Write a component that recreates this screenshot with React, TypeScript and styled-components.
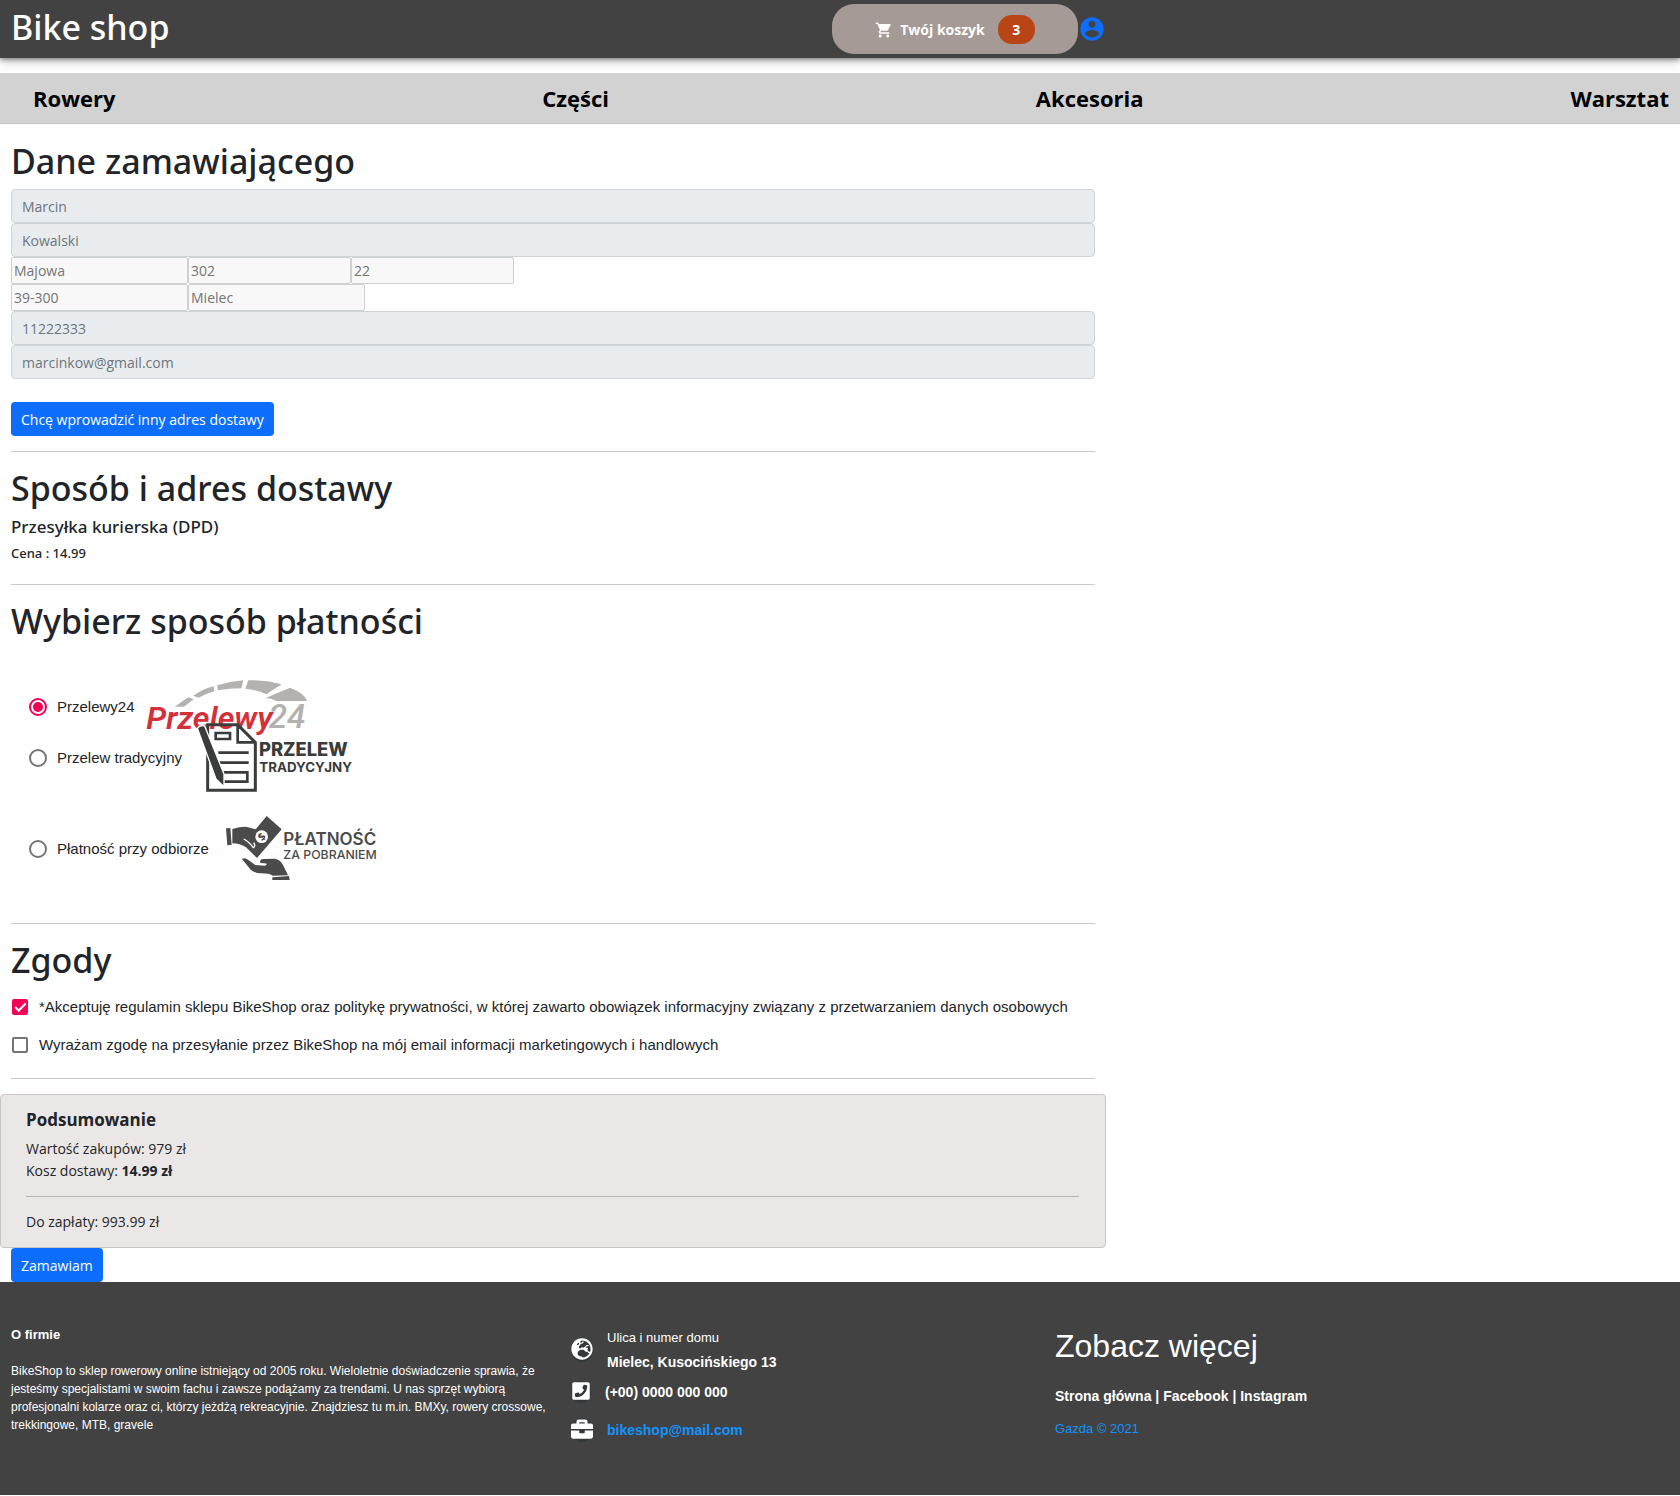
import React from "react";
import styled, { createGlobalStyle } from "styled-components";
import { FaPhoneSquare, FaBriefcase, FaGlobeEurope } from "react-icons/fa";

const sans = `"Open Sans", "Noto Sans", sans-serif`;
const display = `"Noto Sans", "Open Sans", sans-serif`;
const arial = `"Liberation Sans", Arial, sans-serif`;

const GlobalStyle = createGlobalStyle`
  *, *::before, *::after { box-sizing: border-box; }
  body {
    margin: 0;
    background: #fff;
    color: #212529;
    font-family: ${sans};
    font-size: 14px;
    line-height: 21px;
  }
  h1, h2, h3, p, ul { margin: 0; padding: 0; }
`;

const TopBar = styled.header`
  display: grid;
  grid-template-columns: 2fr 1fr;
  height: 58px;
  padding-right: 21px;
  background: #424242;
  box-shadow: 0 2px 4px rgba(0, 0, 0, 0.35), 0 4px 10px rgba(0, 0, 0, 0.2);
`;

const TopBarInner = styled.div`
  display: flex;
  align-items: center;
  justify-content: space-between;
  padding-left: 11px;
`;

const Brand = styled.h1`
  padding-bottom: 4px;
  color: #fff;
  font-family: ${display};
  font-size: 34px;
  font-weight: 500;
  line-height: 42px;
`;

const TopActions = styled.div`
  display: flex;
  align-items: center;
`;

const CartButton = styled.button`
  display: flex;
  align-items: center;
  justify-content: center;
  width: 246px;
  height: 50px;
  border: 0;
  border-radius: 22px;
  background: #a59a95;
  color: #fff;
  font: 700 14px/21px ${sans};
`;

const CartIcon = styled.svg`
  margin-top: 2px;
`;

const CartLabel = styled.span`
  padding: 0 13px 0 7px;
`;

const CartCount = styled.span`
  width: 37px;
  border-radius: 14px;
  background: #b94517;
  line-height: 29px;
  text-align: center;
`;

const AccountLink = styled.a`
  display: flex;
  color: #0d6efd;
`;

const Nav = styled.nav`
  margin-top: 15px;
  padding: 1px 11px 0 33px;
  border-bottom: 1px solid #c6c6c6;
  background: #d2d2d2;
`;

const NavList = styled.ul`
  display: flex;
  justify-content: space-between;
  list-style: none;
`;

const NavLink = styled.a`
  display: block;
  color: #000;
  font-size: 22px;
  font-weight: 700;
  line-height: 49px;
  text-decoration: none;
`;

const Layout = styled.div`
  display: grid;
  grid-template-columns: 2fr 1fr;
  padding: 16px 21px 0 0;
`;

const Section = styled.section<{ $bottom?: number }>`
  margin: 0 11px;
  padding-bottom: ${(p) => p.$bottom ?? 14}px;
  & + & {
    padding-top: 15px;
    border-top: 1px solid #c8c9ca;
  }
`;

const Heading = styled.h2`
  margin-bottom: 7px;
  font-family: ${display};
  font-size: 34px;
  font-weight: 500;
  line-height: 42px;
`;

const Field = styled.input`
  display: block;
  width: 100%;
  height: 34px;
  padding: 0 10px;
  border: 1px solid #ced4da;
  border-radius: 4px;
  background: #e9ecef;
  color: #6c757d;
  font: 14px ${sans};
  &::placeholder { color: #6c757d; opacity: 1; }
`;

const FieldRow = styled.div`
  display: flex;
`;

const SmallField = styled.input<{ $width: number }>`
  width: ${(p) => p.$width}px;
  height: 27px;
  padding: 0 2px;
  border: 1px solid #d0d0d0;
  border-radius: 2px;
  background: #f8f8f8;
  color: #757575;
  font: 14px ${sans};
  &::placeholder { color: #757575; opacity: 1; }
`;

const PrimaryButton = styled.button`
  height: 34px;
  padding: 0 10px;
  border: 0;
  border-radius: 4px;
  background: #0d6efd;
  color: #fff;
  font: 14px/21px ${sans};
`;

const AddressAction = styled.div`
  display: flex;
  padding-top: 23px;
`;

const SubmitRow = styled.div`
  display: flex;
  padding: 0 11px;
`;

const Method = styled.h3`
  margin-bottom: 8px;
  font-family: ${display};
  font-size: 17px;
  font-weight: 500;
  line-height: 21px;
`;

const Price = styled.p`
  font-family: ${display};
  font-size: 13px;
  font-weight: 500;
  line-height: 17px;
`;

const Payments = styled.div`
  padding: 31px 0 27px 18px;
`;

const PaymentRow = styled.div<{ $height: number; $shift?: number }>`
  display: flex;
  align-items: center;
  height: ${(p) => p.$height}px;
  margin-top: ${(p) => p.$shift ?? 0}px;
`;

const OptionLabel = styled.label`
  padding-bottom: 2px;
  font: 15px/21px ${arial};
`;

const Radio = styled.input`
  appearance: none;
  display: grid;
  place-content: center;
  width: 18px;
  height: 18px;
  margin: 0 10px 0 0;
  border: 2px solid #757575;
  border-radius: 50%;
  &:checked { border-color: #f50057; }
  &:checked::before {
    content: "";
    width: 10px;
    height: 10px;
    border-radius: 50%;
    background: #f50057;
  }
`;

const Logo = styled.svg`
  margin-left: 12px;
  overflow: visible;
`;

const ConsentRow = styled.div`
  display: flex;
  align-items: center;
  height: 38px;
`;

const Checkbox = styled.input`
  appearance: none;
  display: grid;
  place-content: center;
  width: 16px;
  height: 16px;
  margin: 0 11px 0 1px;
  border: 2px solid #757575;
  border-radius: 2px;
  &:checked { border-color: #f50057; background: #f50057; }
  &:checked::before {
    content: "";
    width: 11px;
    height: 6px;
    margin-bottom: 3px;
    border: solid #fff;
    border-width: 0 0 2px 2px;
    rotate: -45deg;
  }
`;

const Summary = styled.section`
  padding: 14px 26px 14px 25px;
  border: 1px solid #c8c5c4;
  border-radius: 4px;
  background: #ebe7e6;
`;

const SummaryTitle = styled.h3`
  margin-bottom: 8px;
  font-size: 17px;
  font-weight: 700;
  line-height: 21px;
`;

const SummaryLine = styled.p`
  font-size: 14px;
  line-height: 22px;
`;

const SummaryTotal = styled.div`
  margin-top: 14px;
  padding-top: 14px;
  border-top: 1px solid #b8b4b4;
`;

const Footer = styled.footer`
  display: grid;
  grid-template-columns: 560fr 484fr 614fr;
  min-height: 213px;
  padding: 0 11px;
  background: #424242;
  color: #fff;
  font-family: ${arial};
  font-size: 13px;
  line-height: 18px;
`;

const About = styled.div`
  padding: 44px 22px 0 0;
  font-size: 12px;
`;

const AboutTitle = styled.h3`
  margin-bottom: 18px;
  font-size: 13px;
  font-weight: 700;
  line-height: 18px;
`;

const Contact = styled.div`
  display: flex;
  flex-direction: column;
  padding-top: 44px;
`;

const ContactRow = styled.div<{ $height: number }>`
  display: flex;
  align-items: center;
  gap: 14px;
  height: ${(p) => p.$height}px;
`;

const IconBadge = styled.span`
  display: flex;
  padding-bottom: 2px;
  border-radius: 50%;
  background: #33383b;
`;

const Street = styled.p`
  line-height: 24px;
  strong { font-size: 14px; }
`;

const Phone = styled.p`
  font-size: 14px;
  font-weight: 700;
`;

const MailLink = styled.a`
  color: #1194ff;
  font-size: 14px;
  font-weight: 700;
  text-decoration: none;
`;

const More = styled.div`
  padding-top: 44px;
`;

const MoreTitle = styled.h2`
  font-size: 32px;
  font-weight: 400;
  line-height: 40px;
`;

const MoreLinks = styled.p`
  padding: 21px 0 15px;
  font-size: 14px;
  font-weight: 700;
  line-height: 18px;
  a { color: #fff; text-decoration: none; }
`;

const Copyright = styled.p`
  color: #1194ff;
`;

function Przelewy24Logo() {
  return (
    <Logo width="162" height="54" viewBox="441 63 486 162" aria-hidden="true">
      <g fill="#b3b2b1">
        <path d="M524 143 L565 115 L581 121 L552 143 Z" />
        <path d="M580 110 Q608 90 641 82 L643 97 Q615 105 596 116 Z" />
        <path d="M652 79 Q690 67 730 64 L724 88 Q688 88 653 94 Z" />
        <path d="M745 64 Q795 62 845 76 L799 106 Q770 92 736 89 Z" />
        <path d="M870 86 Q915 103 921 126 L828 126 Q818 119 797 117 Z" />
      </g>
      <text x="439" y="209" fill="#d4303a" fontFamily="Roboto" fontSize="96" fontWeight="600" fontStyle="italic">Przelewy</text>
      <text x="806" y="208" fill="#b3b2b1" fontFamily="Roboto" fontSize="100" fontWeight="500" fontStyle="italic">24</text>
    </Logo>
  );
}

function TransferLogo() {
  return (
    <Logo width="159" height="70" viewBox="582 192 477 210" aria-hidden="true">
      <path d="M623 197 H713 L766 250 V394 H623 Z" fill="none" stroke="#3a3c3b" strokeWidth="9" />
      <path d="M713 197 V250 H766" fill="none" stroke="#3a3c3b" strokeWidth="8" />
      <path d="M647 222 H690 V240 H647 Z M655 281 H746 M655 311 H746 M660 340 H742 V368 H670" fill="none" stroke="#3a3c3b" strokeWidth="8" />
      <path d="M592 208 Q600 196 614 201 L672 345 L672 383 L648 360 Z" fill="#3a3c3b" stroke="#fff" strokeWidth="4" />
      <g fill="#3a3c3b" fontFamily="Inter">
        <text x="777" y="291" fontSize="55" fontWeight="800">PRZELEW</text>
        <text x="778" y="339" fontSize="40" fontWeight="700">TRADYCYJNY</text>
      </g>
    </Logo>
  );
}

function CashOnDeliveryLogo() {
  return (
    <Logo width="158" height="66" viewBox="660 471 474 198" aria-hidden="true">
      <g fill="#4b4b4b">
        <path d="M675 508 L688 507 L692 557 L679 559 Z" />
        <path d="M694 510 Q715 503 735 503 L764 511 L797 471 L842 511 L768 597 L735 565 Q716 553 694 553 Z" />
        <path d="M723 600 Q732 594 743 604 L763 618 L792 620 Q804 613 790 613 L778 612 Q775 600 787 600 L822 599 Q838 602 846 618 L861 649 L815 650 Q805 643 780 643 Q762 643 749 632 Z" />
        <path d="M814 655 L864 651 L866 663 L814 663 Z" />
      </g>
      <path d="M728 540 Q744 548 757 566 Q765 562 758 551" fill="none" stroke="#fff" strokeWidth="4" />
      <circle cx="782" cy="533" r="19" fill="#fff" />
      <text x="782" y="545" fill="#4b4b4b" fontFamily="Open Sans" fontSize="33" fontWeight="700" textAnchor="middle" transform="rotate(-45 782 533)">$</text>
      <g fill="#4b4b4b" fontFamily="Inter">
        <text x="847" y="557" fontSize="51" fontWeight="600">PŁATNOŚĆ</text>
        <text x="847" y="600" fontSize="37" fontWeight="500">ZA POBRANIEM</text>
      </g>
    </Logo>
  );
}

const categories = ["Rowery", "Części", "Akcesoria", "Warsztat"];

export default function App() {
  return (
    <>
      <GlobalStyle />
      <TopBar>
        <TopBarInner>
          <Brand>Bike shop</Brand>
          <TopActions>
            <CartButton type="button">
              <CartIcon width="18" height="18" viewBox="0 0 24 24" fill="currentColor" aria-hidden="true">
                <path d="M7 18c-1.1 0-1.99.9-1.99 2S5.9 22 7 22s2-.9 2-2-.9-2-2-2zM1 2v2h2l3.6 7.59-1.35 2.45c-.16.28-.25.61-.25.96 0 1.1.9 2 2 2h12v-2H7.42c-.14 0-.25-.11-.25-.25l.03-.12.9-1.63h7.45c.75 0 1.41-.41 1.75-1.03l3.58-6.49c.08-.14.12-.31.12-.48 0-.55-.45-1-1-1H5.21l-.94-2H1zm16 16c-1.1 0-1.99.9-1.99 2s.89 2 1.99 2 2-.9 2-2-.9-2-2-2z" />
              </CartIcon>
              <CartLabel>Twój koszyk</CartLabel>
              <CartCount>3</CartCount>
            </CartButton>
            <AccountLink href="#account" aria-label="Konto">
              <svg width="28" height="28" viewBox="0 0 24 24" fill="currentColor" aria-hidden="true">
                <path d="M12 2C6.48 2 2 6.48 2 12s4.48 10 10 10 10-4.48 10-10S17.52 2 12 2zm0 3c1.66 0 3 1.34 3 3s-1.34 3-3 3-3-1.34-3-3 1.34-3 3-3zm0 14.2c-2.5 0-4.71-1.28-6-3.22.03-1.99 4-3.08 6-3.08 1.99 0 5.97 1.09 6 3.08-1.29 1.94-3.5 3.22-6 3.22z" />
              </svg>
            </AccountLink>
          </TopActions>
        </TopBarInner>
      </TopBar>

      <Nav>
        <NavList>
          {categories.map((name) => (
            <li key={name}>
              <NavLink href="#">{name}</NavLink>
            </li>
          ))}
        </NavList>
      </Nav>

      <Layout>
        <main>
          <Section $bottom={15}>
            <Heading>Dane zamawiającego</Heading>
            <Field aria-label="Imię" placeholder="Marcin" disabled />
            <Field aria-label="Nazwisko" placeholder="Kowalski" disabled />
            <FieldRow>
              <SmallField $width={177} aria-label="Ulica" placeholder="Majowa" disabled />
              <SmallField $width={163} aria-label="Numer domu" placeholder="302" disabled />
              <SmallField $width={163} aria-label="Numer mieszkania" placeholder="22" disabled />
            </FieldRow>
            <FieldRow>
              <SmallField $width={177} aria-label="Kod pocztowy" placeholder="39-300" disabled />
              <SmallField $width={177} aria-label="Miasto" placeholder="Mielec" disabled />
            </FieldRow>
            <Field aria-label="Telefon" placeholder="11222333" disabled />
            <Field aria-label="E-mail" placeholder="marcinkow@gmail.com" disabled />
            <AddressAction>
              <PrimaryButton type="button">Chcę wprowadzić inny adres dostawy</PrimaryButton>
            </AddressAction>
          </Section>

          <Section $bottom={22}>
            <Heading>Sposób i adres dostawy</Heading>
            <Method>Przesyłka kurierska (DPD)</Method>
            <Price>Cena : 14.99</Price>
          </Section>

          <Section>
            <Heading>Wybierz sposób płatności</Heading>
            <Payments>
              <PaymentRow $height={54}>
                <Radio type="radio" name="payment" id="pay-p24" defaultChecked />
                <OptionLabel htmlFor="pay-p24">Przelewy24</OptionLabel>
                <Przelewy24Logo />
              </PaymentRow>
              <PaymentRow $height={70} $shift={-11}>
                <Radio type="radio" name="payment" id="pay-transfer" />
                <OptionLabel htmlFor="pay-transfer">Przelew tradycyjny</OptionLabel>
                <TransferLogo />
              </PaymentRow>
              <PaymentRow $height={66} $shift={23}>
                <Radio type="radio" name="payment" id="pay-cod" />
                <OptionLabel htmlFor="pay-cod">Płatność przy odbiorze</OptionLabel>
                <CashOnDeliveryLogo />
              </PaymentRow>
            </Payments>
          </Section>

          <Section>
            <Heading>Zgody</Heading>
            <ConsentRow>
              <Checkbox type="checkbox" id="terms" defaultChecked />
              <OptionLabel htmlFor="terms">
                *Akceptuję regulamin sklepu BikeShop oraz politykę prywatności, w której zawarto obowiązek
                informacyjny związany z przetwarzaniem danych osobowych
              </OptionLabel>
            </ConsentRow>
            <ConsentRow>
              <Checkbox type="checkbox" id="marketing" />
              <OptionLabel htmlFor="marketing">
                Wyrażam zgodę na przesyłanie przez BikeShop na mój email informacji marketingowych i handlowych
              </OptionLabel>
            </ConsentRow>
          </Section>

          <Section $bottom={0} />

          <Summary>
            <SummaryTitle>Podsumowanie</SummaryTitle>
            <SummaryLine>Wartość zakupów: 979 zł</SummaryLine>
            <SummaryLine>
              Kosz dostawy: <strong>14.99 zł</strong>
            </SummaryLine>
            <SummaryTotal>
              <SummaryLine>Do zapłaty: 993.99 zł</SummaryLine>
            </SummaryTotal>
          </Summary>
          <SubmitRow>
            <PrimaryButton type="submit">Zamawiam</PrimaryButton>
          </SubmitRow>
        </main>
      </Layout>

      <Footer>
        <About>
          <AboutTitle>O firmie</AboutTitle>
          <p>
            BikeShop to sklep rowerowy online istniejący od 2005 roku. Wieloletnie doświadczenie sprawia, że
            jesteśmy specjalistami w swoim fachu i zawsze podążamy za trendami. U nas sprzęt wybiorą
            profesjonalni kolarze oraz ci, którzy jeżdżą rekreacyjnie. Znajdziesz tu m.in. BMXy, rowery
            crossowe, trekkingowe, MTB, gravele
          </p>
        </About>
        <Contact>
          <ContactRow $height={48}>
            <IconBadge>
              <FaGlobeEurope size={22} />
            </IconBadge>
            <Street>
              Ulica i numer domu
              <br />
              <strong>Mielec, Kusocińskiego 13</strong>
            </Street>
          </ContactRow>
          <ContactRow $height={36}>
            <IconBadge>
              <FaPhoneSquare size={20} />
            </IconBadge>
            <Phone>(+00) 0000 000 000</Phone>
          </ContactRow>
          <ContactRow $height={40}>
            <IconBadge>
              <FaBriefcase size={22} />
            </IconBadge>
            <MailLink href="mailto:bikeshop@mail.com">bikeshop@mail.com</MailLink>
          </ContactRow>
        </Contact>
        <More>
          <MoreTitle>Zobacz więcej</MoreTitle>
          <MoreLinks>
            <a href="#">Strona główna</a> | <a href="#">Facebook</a> | <a href="#">Instagram</a>
          </MoreLinks>
          <Copyright>Gazda © 2021</Copyright>
        </More>
      </Footer>
    </>
  );
}
